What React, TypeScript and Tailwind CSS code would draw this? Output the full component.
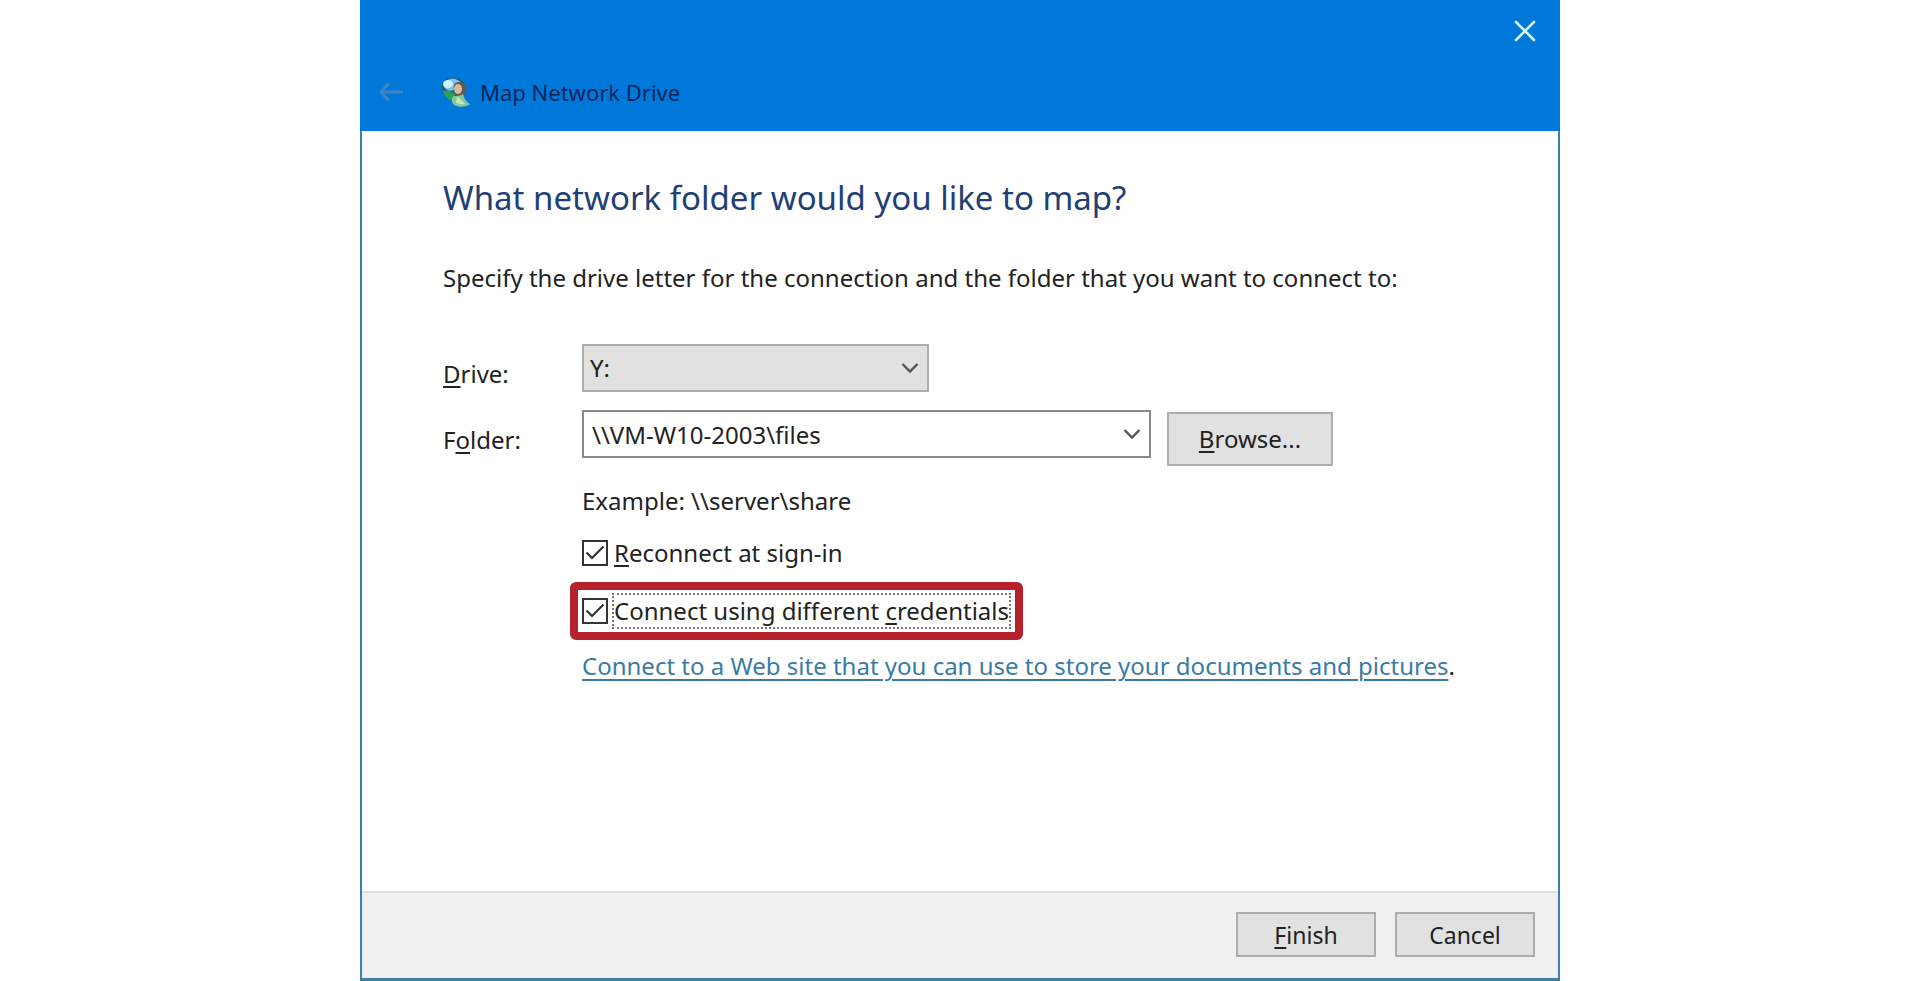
import { useState } from "react";

export default function App() {
  const [drive, setDrive] = useState("Y:");
  const [folder, setFolder] = useState("\\\\VM-W10-2003\\files");
  const [reconnect, setReconnect] = useState(true);
  const [credentials, setCredentials] = useState(true);

  return (
    <div className="min-h-screen bg-white">
      <main className="mx-auto flex min-h-screen w-full max-w-[1200px] flex-col font-['Noto_Sans',sans-serif] text-2xl leading-8 text-[#222222]">
        <header className="flex h-[131px] flex-col bg-[#0078d9]">
          <div className="flex justify-end px-[22px] pt-[18px]">
            <button type="button" aria-label="Close" className="p-0.5">
              <svg viewBox="0 0 22 22" className="size-[22px]" fill="none" stroke="#d9f6ff" strokeWidth="2.6" strokeLinecap="round">
                <path d="M2 2 20 20M20 2 2 20" />
              </svg>
            </button>
          </div>
          <div className="flex items-center pt-8 pl-[18px]">
            <button type="button" aria-label="Back" disabled>
              <svg viewBox="0 0 26 22" className="h-[22px] w-[26px]" fill="none" stroke="#3d84c0" strokeWidth="3">
                <path d="M25 11H3M11 2 3 11l8 9" />
              </svg>
            </button>
            <NetworkIcon />
            <h1 className="ml-2.5 text-[22px] text-[#06265c]">Map Network Drive</h1>
          </div>
        </header>

        <div className="flex flex-1 flex-col border-x-2 border-b-3 border-[#3f7fa8]">
          <div className="flex-1 px-[81px] pt-[45px]">
            <h2 className="text-[33px] leading-11 text-[#1f3f77]">What network folder would you like to map?</h2>
            <p className="mt-[42px]">Specify the drive letter for the connection and the folder that you want to connect to:</p>

            <div className="mt-[50px] flex">
              <label htmlFor="drive" className="w-[139px] pt-3.5">
                <Key>D</Key>rive:
              </label>
              <div className="grid w-[347px] items-center">
                <select
                  id="drive"
                  value={drive}
                  onChange={(e) => setDrive(e.target.value)}
                  className="col-start-1 row-start-1 h-12 appearance-none border-2 border-[#adadad] bg-[#e1e1e1] px-1.5"
                >
                  <option>Y:</option>
                  <option>Z:</option>
                </select>
                <Chevron className="pointer-events-none col-start-1 row-start-1 mr-2.5 justify-self-end" />
              </div>
            </div>

            <div className="mt-[18px] flex">
              <label htmlFor="folder" className="w-[139px] pt-3.5">
                F<Key>o</Key>lder:
              </label>
              <div className="flex h-12 w-[569px] items-center border-2 border-[#8a8a8a] bg-white">
                <input
                  id="folder"
                  value={folder}
                  onChange={(e) => setFolder(e.target.value)}
                  className="h-full min-w-0 flex-1 px-2 outline-none"
                />
                <button type="button" aria-label="Recent folders" className="px-2">
                  <Chevron />
                </button>
              </div>
              <button type="button" className="mt-0.5 ml-4 h-[54px] w-[166px] border-2 border-[#adadad] bg-[#e1e1e1]">
                <Key>B</Key>rowse...
              </button>
            </div>

            <div className="mt-[19px] flex flex-col items-start pl-[139px]">
              <p>Example: \\server\share</p>
              <div className="mt-5 flex items-center">
                <CheckBox id="reconnect" checked={reconnect} onChange={setReconnect} />
                <label htmlFor="reconnect" className="ml-1.5">
                  <Key>R</Key>econnect at sign-in
                </label>
              </div>
              <div className="mt-[13px] -ml-3 flex items-center rounded-md border-8 border-[#b5222b] py-[3px] pr-1 pl-1">
                <CheckBox id="credentials" checked={credentials} onChange={setCredentials} />
                <label htmlFor="credentials" className="ml-1 border-2 border-dotted border-[#777777] leading-8">
                  Connect using different <Key>c</Key>redentials
                </label>
              </div>
              <p className="mt-2.5">
                <a href="#" className="text-[#3a7ba6] underline decoration-2 underline-offset-4">
                  Connect to a Web site that you can use to store your documents and pictures
                </a>
                .
              </p>
            </div>
          </div>

          <footer className="flex justify-end gap-[19px] border-t-2 border-[#e1e1e1] bg-[#f0f0f0] pt-[19px] pr-[23px] pb-[21px] text-[23px]">
            <button type="button" className="h-[45px] w-[140px] border-2 border-[#adadad] bg-[#e1e1e1]">
              <Key>F</Key>inish
            </button>
            <button type="button" className="h-[45px] w-[140px] border-2 border-[#adadad] bg-[#e1e1e1]">
              Cancel
            </button>
          </footer>
        </div>
      </main>
    </div>
  );
}

// Underlined access key inside a label
function Key({ children }: { children: React.ReactNode }) {
  return <span className="underline decoration-2 underline-offset-3">{children}</span>;
}

function Chevron({ className = "" }: { className?: string }) {
  return (
    <svg viewBox="0 0 18 12" className={`h-3 w-[18px] ${className}`} fill="none" stroke="#555555" strokeWidth="2.4">
      <path d="M1.500 2 9 9.500 16.500 2" />
    </svg>
  );
}

function CheckBox({ id, checked, onChange }: { id: string; checked: boolean; onChange: (v: boolean) => void }) {
  return (
    <span className="grid size-[26px]">
      <input
        id={id}
        type="checkbox"
        checked={checked}
        onChange={(e) => onChange(e.target.checked)}
        className="col-start-1 row-start-1 size-[26px] appearance-none border-2 border-[#333333] bg-white"
      />
      {checked && (
        <svg viewBox="0 0 26 26" className="pointer-events-none col-start-1 row-start-1 size-[26px]" fill="none" stroke="#333333" strokeWidth="2.2">
          <path d="M4.500 12.500 10 18 21.500 6.500" />
        </svg>
      )}
    </span>
  );
}

function NetworkIcon() {
  return (
    <svg viewBox="0 0 30 32" className="ml-9 h-8 w-[30px]">
      <path d="M2 9C4 3 10 1 15 2c5 0 9 3 10 7l-5 13-6 4C7 24 1 17 2 9Z" fill="#1c5f7c" />
      <path d="M3 9C5 4 10 2 15 3c4 1 6 3 7 5-5-1-7 2-8 6-5 2-9 0-11-5Z" fill="#7cc4ea" />
      <ellipse cx="8" cy="8" rx="5" ry="4" fill="#c9f4ff" />
      <path d="M3 15c5-1 9 0 12 3l1 7C9 25 4 21 3 15Z" fill="#2f9e58" />
      <path d="M14 9c2-4 8-4 11 0 1 4 1 9-2 11h-6c-3-2-4-7-3-11Z" fill="#6b5648" />
      <ellipse cx="18" cy="13" rx="4" ry="5" fill="#d9bba4" />
      <path d="M14 20c3 0 6 0 9-2 1 4 3 8 7 10-3 3-11 4-16 1-3-3-3-7 0-9Z" fill="#86c79c" />
      <path d="M17 21c3 1 5 4 8 7-4 1-7 0-9-2Z" fill="#c4e6bc" />
    </svg>
  );
}
